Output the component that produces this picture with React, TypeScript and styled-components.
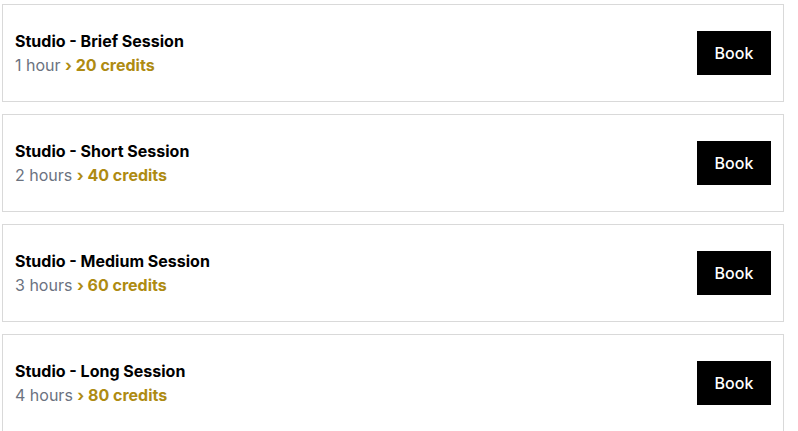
import React from 'react'
import styled, { createGlobalStyle } from 'styled-components'

const GlobalStyle = createGlobalStyle`
  body {
    margin: 0;
    background: #fff;
    font-family: Inter, "Noto Sans", sans-serif;
  }
`

const List = styled.div`
  display: flex;
  flex-direction: column;
  gap: 12px;
  padding: 4px 14px 0 2px;
`

const Card = styled.div`
  display: flex;
  align-items: center;
  justify-content: space-between;
  height: 98px;
  box-sizing: border-box;
  padding: 0 12px;
  border: 1px solid #d9d9d9;
  background: #fff;
`

const Info = styled.div`
  display: flex;
  flex-direction: column;
`

const Title = styled.div`
  font-size: 16px;
  line-height: 24px;
  font-weight: 650;
  color: #000;
`

const Meta = styled.div`
  font-size: 16px;
  line-height: 24px;
  color: #6b7280;
`

const Credits = styled.span`
  font-weight: 700;
  color: #ae8b12;
`

const BookButton = styled.button`
  width: 74px;
  height: 44px;
  border: none;
  background: #000;
  color: #fff;
  font-family: Inter, "Noto Sans", sans-serif;
  font-size: 16px;
  font-weight: 500;
  cursor: pointer;
`

const sessions = [
  { name: 'Brief', duration: '1 hour', credits: 20 },
  { name: 'Short', duration: '2 hours', credits: 40 },
  { name: 'Medium', duration: '3 hours', credits: 60 },
  { name: 'Long', duration: '4 hours', credits: 80 },
]

const App: React.FC = () => (
  <>
    <GlobalStyle />
    <List>
      {sessions.map((s) => (
        <Card key={s.name}>
          <Info>
            <Title>Studio - {s.name} Session</Title>
            <Meta>
              {s.duration} <Credits>› {s.credits} credits</Credits>
            </Meta>
          </Info>
          <BookButton>Book</BookButton>
        </Card>
      ))}
    </List>
  </>
)

export default App
